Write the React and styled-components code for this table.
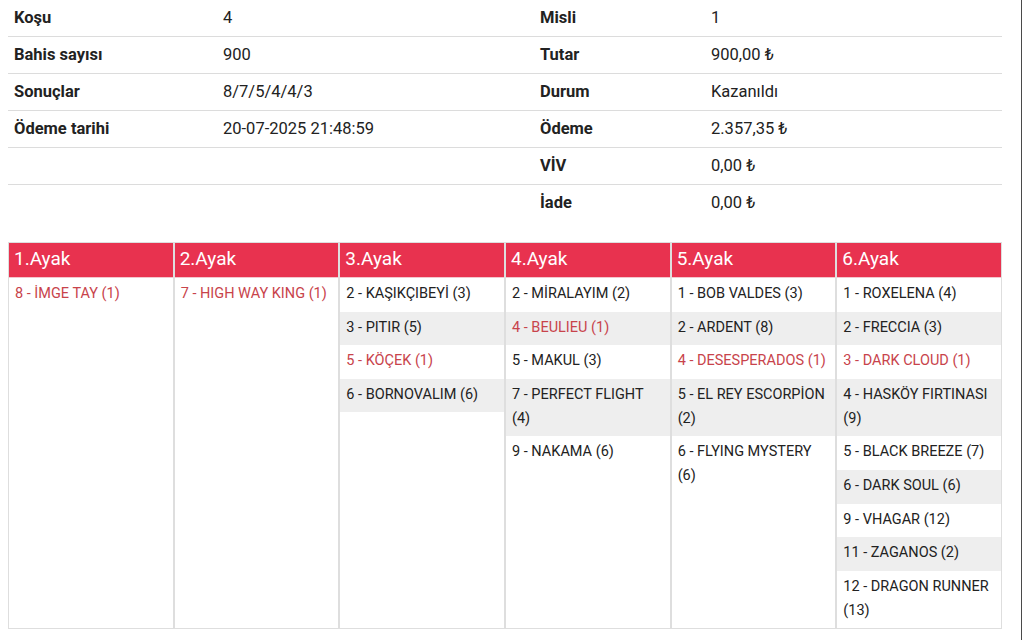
import React from 'react';
import styled, { createGlobalStyle } from 'styled-components';

const GlobalStyle = createGlobalStyle`
	html, body {
		margin: 0;
		padding: 0;
		background: #fff;
		font-family: Roboto, 'Liberation Sans', Arial, sans-serif;
		color: #222;
	}
	* {
		box-sizing: border-box;
	}
`;

const Page = styled.div`
	width: 1022px;
	min-height: 641px;
	padding: 0 20px 0 8px;
	border-right: 1px solid #4a4a4a;
`;

const InfoTable = styled.table`
	width: 994px;
	margin-top: -1px;
	border-collapse: collapse;
	font-size: 16.5px;
	table-layout: fixed;
`;

const InfoRow = styled.tr`
	height: 37px;
	border-bottom: ${({ last }) => (last ? 'none' : '1px solid #dcdcdc')};
`;

const Label = styled.td`
	font-weight: 700;
	padding: 0 6px;
	width: ${({ w }) => w}px;
	color: #222;
`;

const Value = styled.td`
	padding: 0 6px;
	width: ${({ w }) => w}px;
	color: #222;
`;

const Legs = styled.div`
	display: grid;
	grid-template-columns: repeat(6, 1fr);
	width: 994px;
	margin-top: 21px;
`;

const Leg = styled.div`
	display: flex;
	flex-direction: column;
	border: 1px solid #dedede;
`;

const LegHeader = styled.div`
	background: #e8324f;
	color: #fff;
	font-size: 19px;
	height: 35px;
	line-height: 32px;
	padding: 0 5px;
	border-bottom: 1px solid #f3c6cd;
`;

const Runner = styled.div`
	font-size: 14.5px;
	line-height: 24px;
	padding: 4px 6px 5.6px;
	background: ${({ striped }) => (striped ? '#eeeeee' : '#fff')};
	color: ${({ winner }) => (winner ? '#c8434b' : '#222')};
`;

const info = [
	['Koşu', '4', 'Misli', '1'],
	['Bahis sayısı', '900', 'Tutar', '900,00 ₺'],
	['Sonuçlar', '8/7/5/4/4/3', 'Durum', 'Kazanıldı'],
	['Ödeme tarihi', '20-07-2025 21:48:59', 'Ödeme', '2.357,35 ₺'],
	['', '', 'VİV', '0,00 ₺'],
	['', '', 'İade', '0,00 ₺'],
];

const legs = [
	{ title: '1.Ayak', runners: [['8 - İMGE TAY (1)', true]] },
	{ title: '2.Ayak', runners: [['7 - HIGH WAY KING (1)', true]] },
	{
		title: '3.Ayak',
		runners: [
			['2 - KAŞIKÇIBEYİ (3)'],
			['3 - PITIR (5)'],
			['5 - KÖÇEK (1)', true],
			['6 - BORNOVALIM (6)'],
		],
	},
	{
		title: '4.Ayak',
		runners: [
			['2 - MİRALAYIM (2)'],
			['4 - BEULIEU (1)', true],
			['5 - MAKUL (3)'],
			['7 - PERFECT FLIGHT (4)'],
			['9 - NAKAMA (6)'],
		],
	},
	{
		title: '5.Ayak',
		runners: [
			['1 - BOB VALDES (3)'],
			['2 - ARDENT (8)'],
			['4 - DESESPERADOS (1)', true],
			['5 - EL REY ESCORPİON (2)'],
			['6 - FLYING MYSTERY (6)'],
		],
	},
	{
		title: '6.Ayak',
		runners: [
			['1 - ROXELENA (4)'],
			['2 - FRECCIA (3)'],
			['3 - DARK CLOUD (1)', true],
			['4 - HASKÖY FIRTINASI (9)'],
			['5 - BLACK BREEZE (7)'],
			['6 - DARK SOUL (6)'],
			['9 - VHAGAR (12)'],
			['11 - ZAGANOS (2)'],
			['12 - DRAGON RUNNER (13)'],
		],
	},
];

const App = () => {
	return (
		<Page>
			<GlobalStyle />
			<InfoTable>
				<tbody>
					{info.map((row, i) => (
						<InfoRow key={i} last={i === info.length - 1}>
							<Label w={209}>{row[0]}</Label>
							<Value w={317}>{row[1]}</Value>
							<Label w={171}>{row[2]}</Label>
							<Value w={297}>{row[3]}</Value>
						</InfoRow>
					))}
				</tbody>
			</InfoTable>
			<Legs>
				{legs.map((leg) => (
					<Leg key={leg.title}>
						<LegHeader>{leg.title}</LegHeader>
						{leg.runners.map(([name, winner], i) => (
							<Runner key={name} striped={i % 2 === 1} winner={winner}>
								{name}
							</Runner>
						))}
					</Leg>
				))}
			</Legs>
		</Page>
	);
};

export default App;
